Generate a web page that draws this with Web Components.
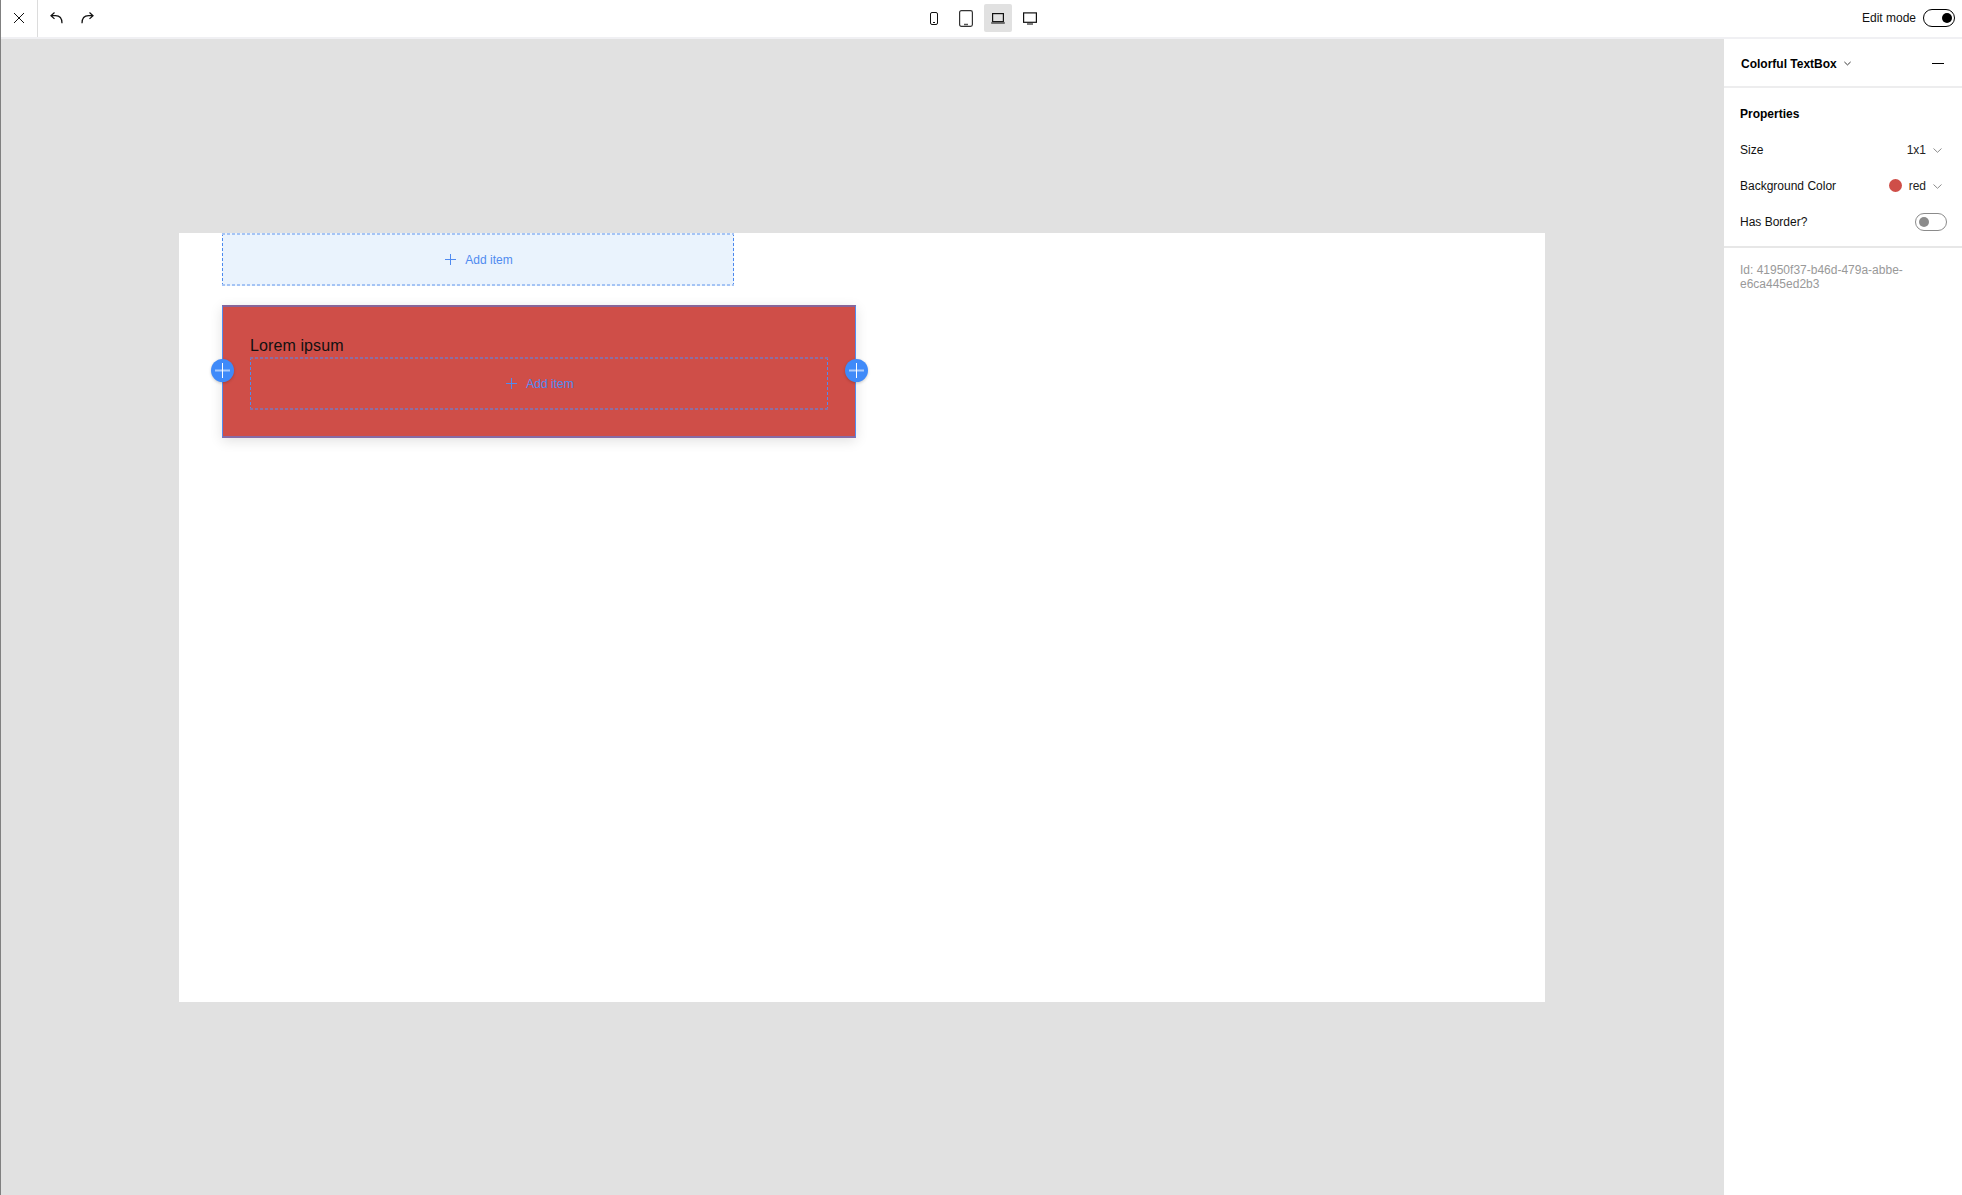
<!DOCTYPE html>
<html lang="en">
<head>
<meta charset="utf-8">
<title>Page editor</title>
<style>
html,body{margin:0;height:100%;overflow:hidden}
body{font:12px/14px "Liberation Sans",Arial,sans-serif;color:#111}
</style>
</head>
<body>
<page-editor></page-editor>
<script>
function define(name, html) {
  const template = document.createElement('template');
  template.innerHTML = '<style>*{box-sizing:border-box}svg{display:block;fill:none;stroke:currentColor;overflow:visible}</style>' + html;
  customElements.define(name, class extends HTMLElement {
    constructor() {
      super();
      this.attachShadow({mode: 'open'}).appendChild(template.content.cloneNode(true));
    }
  });
}

define('toggle-switch', `<style>
:host{display:block;width:32px;height:18px;color:#000}
:host([off]){color:#8b8b8b}
div{display:flex;align-items:center;justify-content:flex-end;width:32px;height:18px;border:1px solid currentColor;border-radius:9px;padding:0 2.5px}
:host([off]) div{justify-content:flex-start}
i{width:10px;height:10px;border-radius:50%;background:currentColor}
</style><div><i></i></div>`);

define('chevron-icon', `<style>:host{display:block;width:9px;height:5px}</style>
<svg width="9" height="5"><path d="M.5.5 4.5 4.3 8.5.5"/></svg>`);

define('device-button', `<style>
:host{display:flex;align-items:center;justify-content:center;width:28px;height:28px;border-radius:2px}
:host([active]){background:#e1e1e1}
</style><slot></slot>`);

define('editor-toolbar', `<style>
:host{display:grid;grid-template-columns:1fr auto 1fr;height:39px;background:#fff;border-bottom:2px solid #f0f0f3;color:#111;flex:none}
.left,.mid,.right{display:flex;align-items:center;height:36px}
.close{display:flex;align-items:center;justify-content:center;width:37px;height:37px;border-right:1px solid #dcdcdc;align-self:flex-start}
.close svg{margin-top:-1px}
.undo{margin-left:12px}.redo{margin-left:18px}
.mid{gap:4px}
.right{justify-content:flex-end;padding-right:7px;gap:7px}
</style>
<div class="left">
 <div class="close"><svg width="10" height="10"><path d="M0 0 10 10M10 0 0 10"/></svg></div>
 <svg class="undo" width="13" height="12" stroke-width="1.25"><path d="M4.5.5 1 3.7 4.5 6.9M1 3.7H5.5C9.5 3.7 12 6.3 12 11.3"/></svg>
 <svg class="redo" width="13" height="12" stroke-width="1.25"><path d="M8.5.5 12 3.7 8.5 6.9M12 3.7H7.5C3.5 3.7 1 6.3 1 11.3"/></svg>
</div>
<div class="mid">
 <device-button><svg width="8" height="13"><rect x=".5" y=".5" width="7" height="12" rx="1.5"/><path d="M3 10.5H5"/></svg></device-button>
 <device-button><svg width="14" height="17"><rect x=".6" y=".6" width="12.8" height="15.8" rx="1.8" stroke="#333" stroke-width="1.2"/><path d="M5 14.5H9" stroke="#555" stroke-width="1.5"/></svg></device-button>
 <device-button active><svg width="14" height="11"><rect x="1.6" y=".6" width="10.8" height="8" stroke-width="1.2"/><path d="M.2 9.9H13.8" stroke="#666" stroke-width="2"/></svg></device-button>
 <device-button><svg width="14" height="13"><rect x=".6" y=".9" width="12.8" height="9.4" stroke-width="1.2"/><path d="M4 12H10" stroke="#666" stroke-width="1.7"/></svg></device-button>
</div>
<div class="right"><span>Edit mode</span><toggle-switch></toggle-switch></div>`);

define('add-item', `<style>
:host{display:flex;align-items:center;justify-content:center;height:53px;color:#508bf0;gap:9px;line-height:14px;padding-left:2px;
--side:#4b88ee;--edge:#a5c4f5;
background:
repeating-linear-gradient(90deg,var(--edge) 0 3px,transparent 3px 5px) 0 0/100% 2px no-repeat,
repeating-linear-gradient(90deg,var(--edge) 0 3px,transparent 3px 5px) 0 100%/100% 2px no-repeat,
repeating-linear-gradient(var(--side) 0 3px,transparent 3px 5px) 0 0/1px 100% no-repeat,
repeating-linear-gradient(var(--side) 0 3px,transparent 3px 5px) 100% 0/1px 100% no-repeat,
var(--fill,transparent)}
</style>
<svg width="11" height="11"><path d="M0 5.5H11M5.5 0V11"/></svg><span>Add item</span>`);

define('insert-button', `<style>
:host{position:absolute;width:23px;height:23px;border-radius:50%;background:#3f8af9;color:#fff;box-shadow:0 1px 3px #0003}
</style><svg width="23" height="23"><path d="M4 11.5H19" stroke-opacity=".55" stroke-width="2"/><path d="M11.5 4V19"/></svg>`);

define('color-textbox', `<style>
:host{display:block;position:relative;width:634px;height:133px;background:#cf4e48;border:solid #538bee;border-width:2px 1px;border-top-color:#876599;border-bottom-color:#876ba5;padding:30px 27px 0;box-shadow:0 3px 12px #0000001f}
.text{font-size:16px;line-height:18px;height:20px;letter-spacing:.1px;color:#111}
add-item{width:578px;--side:#538bee;--edge:#8c6ea2}
.l{left:-12px;top:52px}.r{right:-13px;top:52px}
</style><div class="text">Lorem ipsum</div><add-item></add-item><insert-button class="l"></insert-button><insert-button class="r"></insert-button>`);

define('design-canvas', `<style>
:host{display:block;flex:1;background:#e1e1e1;padding:194px 0 0 178px}
.page{width:1366px;height:768.5px;background:#fff;padding-left:43px}
.first{width:512px;--fill:#eaf3fd}
color-textbox{margin-top:19px}
</style><div class="page"><add-item class="first"></add-item><color-textbox></color-textbox></div>`);

define('property-row', `<style>
:host{display:flex;align-items:center;height:36px;padding:0 15px 0 16px;color:#111}
span{flex:1}
</style><span><slot name="label"></slot></span><slot></slot>`);

define('property-panel', `<style>
:host{display:block;width:238px;background:#fff;flex:none}
header{display:flex;align-items:center;height:49px;padding:2px 18px 0 17px;border-bottom:2px solid #ededee;font-weight:700;color:#000}
header chevron-icon{margin-left:6px;transform:scale(.78);--w:1.4}
header svg{margin-left:auto}
h2{margin:0;padding:19px 16px 11px;font-size:12px;line-height:14px;color:#000}
section{height:160px;border-bottom:2px solid #e7e7e7}
.value{display:flex;align-items:center;color:#222;margin-right:5px;height:14px;margin-top:-1px}
.value chevron-icon{margin-left:7px;color:#8c8c8c;position:relative;top:1px}
.dot{width:13px;height:13px;border-radius:50%;background:#cf4e48;margin-right:7px}
p{margin:0;padding:15px 50px 0 16px;line-height:14px;color:#999}
</style>
<header>Colorful TextBox<chevron-icon></chevron-icon><svg width="12" height="1"><path d="M0 .5H12"/></svg></header>
<section><h2>Properties</h2>
<property-row><span slot="label">Size</span><div class="value">1x1<chevron-icon></chevron-icon></div></property-row>
<property-row><span slot="label">Background Color</span><div class="value"><i class="dot"></i>red<chevron-icon></chevron-icon></div></property-row>
<property-row><span slot="label">Has Border?</span><toggle-switch off></toggle-switch></property-row>
</section>
<p>Id: 41950f37-b46d-479a-abbe-e6ca445ed2b3</p>`);

define('page-editor', `<style>
:host{display:flex;flex-direction:column;height:100vh;border-left:1px solid #808080;box-sizing:border-box}
main{display:flex;flex:1;min-height:0}
</style><editor-toolbar></editor-toolbar><main><design-canvas></design-canvas><property-panel></property-panel></main>`);
</script>
</body>
</html>
